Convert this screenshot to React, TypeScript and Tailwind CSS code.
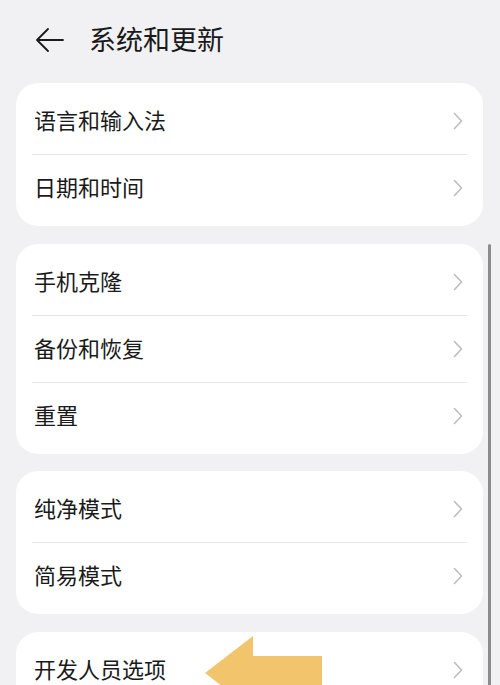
import React from 'react';

const groups = [
  ['语言和输入法', '日期和时间'],
  ['手机克隆', '备份和恢复', '重置'],
  ['纯净模式', '简易模式'],
  ['开发人员选项'],
];

const Chevron = () => (
  <svg width="10" height="18" viewBox="0 0 10 18" fill="none">
    <path d="M1.5 1.5 L8.5 9 L1.5 16.5" stroke="#bdbdbd" strokeWidth="1.6" strokeLinecap="round" strokeLinejoin="round" />
  </svg>
);

const App = () => {
  return (
    <div
      className="relative w-[500px] h-[685px] overflow-hidden bg-[#f1f1f3] text-[#1a1a1a]"
      style={{ fontFamily: '"Noto Sans CJK SC", "Noto Sans", sans-serif' }}
    >
      {/* Header */}
      <div className="h-[83px] flex items-center pl-[35px]">
        <svg width="30" height="26" viewBox="0 0 30 26" fill="none" className="mt-[-4px]">
          <path d="M2 13 H28 M13 2 L2 13 L13 24" stroke="#1a1a1a" strokeWidth="1.8" strokeLinecap="round" strokeLinejoin="round" />
        </svg>
        <h1 className="ml-[24px] text-[27px] font-normal leading-none mt-[-6px]">系统和更新</h1>
      </div>

      {/* Groups */}
      <div className="flex flex-col gap-[17.5px] pl-4 pr-[17px]">
        {groups.map((items, gi) => (
          <div key={gi} className="bg-white rounded-[22px] py-[5px]">
            {items.map((label, i) => (
              <div key={label}>
                {i > 0 && <div className="mx-4 h-px bg-[#e6e6e6]" />}
                <div className="h-[66px] flex items-center justify-between pl-[18px] pr-[20px]">
                  <span className="text-[22px] leading-none mt-[-4px]">{label}</span>
                  <Chevron />
                </div>
              </div>
            ))}
          </div>
        ))}
      </div>

      {/* Scrollbar */}
      <div className="absolute left-[488px] top-[244px] w-[3px] h-[460px] rounded-full bg-[#8c8c8c]" />

      {/* Yellow arrow annotation */}
      <svg className="absolute left-[200px] top-[630px]" width="130" height="90" viewBox="0 0 130 90">
        <path d="M5 43 L53 6 L53 26 L122 26 L122 60 L53 60 L53 80 Z" fill="#f2c56d" />
      </svg>
    </div>
  );
};

export default App;
